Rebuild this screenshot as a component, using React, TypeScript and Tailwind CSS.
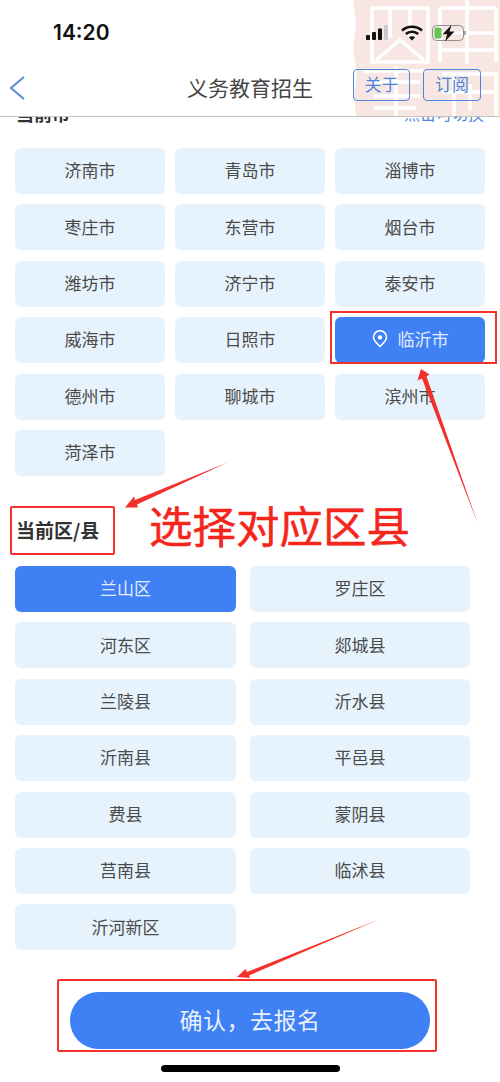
const cities = ['济南市', '青岛市', '淄博市', '枣庄市', '东营市', '烟台市', '潍坊市', '济宁市', '泰安市', '威海市', '日照市', '临沂市', '德州市', '聊城市', '滨州市', '菏泽市'];
const districts = ['兰山区', '罗庄区', '河东区', '郯城县', '兰陵县', '沂水县', '沂南县', '平邑县', '费县', '蒙阴县', '莒南县', '临沭县', '沂河新区'];

const font = { fontFamily: '"Noto Sans CJK SC", "Noto Sans", sans-serif' };

function Chip({ label, active, pin }: { label: string; active?: boolean; pin?: boolean }) {
  return (
    <div className={`h-[46px] rounded-md flex items-center justify-center gap-[10px] pb-[2px] text-[17px] ${active ? 'bg-[#3f80f4] text-[#e4eefd]' : 'bg-[#e6f3fd] text-[#4a4a4a]'}`}>
      {pin && (
        <svg width="16" height="18" viewBox="0 0 16 18" fill="none">
          <path d="M8 16.5C4.5 13 1.5 10.5 1.5 7.2A6.5 6.5 0 0 1 14.5 7.2C14.5 10.5 11.5 13 8 16.5Z" stroke="white" strokeWidth="1.6" />
          <circle cx="8" cy="7.4" r="2.2" fill="white" />
        </svg>
      )}
      {label}
    </div>
  );
}

function Stamp() {
  return (
    <svg className="absolute right-0 top-0" width="150" height="116" viewBox="0 0 150 116" fill="none">
      <path d="M3 0H150V116H6L4 96L7 74L3 50L6 24Z" fill="#f7e6e2" />
      <g stroke="#ffffff" strokeWidth="3.5">
        <path d="M22 8H78V62H22Z" />
        <path d="M40 8V38M60 8V38M26 60L50 40L74 60" />
        <path d="M90 8V62M146 8V62M90 8H146M90 33H146M90 50H146M117 0V64" />
        <path d="M14 71H76M24 82H70M24 96H70M46 66V116M24 108H66" />
        <path d="M92 74H146V116M104 74V116M92 92H146M120 84V110" />
      </g>
    </svg>
  );
}

function StatusBar() {
  return (
    <div className="relative z-10 h-[64px] pt-[18px] pl-[53px] pr-[34px] flex items-start justify-between">
      <span className="text-[21px] leading-[30px] font-semibold text-[#111111]" style={{ fontFamily: '"Inter", sans-serif' }}>14:20</span>
      <div className="flex items-center gap-[9px] h-[30px]">
        <svg width="26" height="16" viewBox="0 0 26 16">
          <rect x="0" y="10" width="4" height="5" rx="1" fill="#111" />
          <rect x="6" y="7" width="4" height="8" rx="1" fill="#111" />
          <rect x="12" y="3.5" width="4" height="11.5" rx="1" fill="#111" />
          <rect x="18" y="0" width="4" height="15" rx="1" fill="#c9c9c9" />
        </svg>
        <svg width="22" height="16" viewBox="0 0 22 16" fill="none" stroke="#111" strokeWidth="2.6">
          <path d="M1 5.5C6.8 0.5 15.2 0.5 21 5.5" />
          <path d="M4.8 9C8.4 6 13.6 6 17.2 9" />
          <path d="M11 15.5L7.8 12.2C9.6 10.8 12.4 10.8 14.2 12.2Z" fill="#111" stroke="none" />
        </svg>
        <svg width="34" height="17" viewBox="0 0 34 17" fill="none">
          <rect x="0.5" y="0.5" width="31" height="15" rx="4" stroke="#8f8f8f" />
          <rect x="2.5" y="2.5" width="7" height="11" rx="2" fill="#62c554" />
          <path d="M33 6V10" stroke="#8f8f8f" strokeWidth="1.5" />
          <path d="M19.5 0L10.5 9.2H15.2L13 16.5L22.5 6.5H17.5Z" fill="#111" />
        </svg>
      </div>
    </div>
  );
}

function NavBar() {
  return (
    <div className="relative z-10 h-[52px] flex items-center justify-center">
      <svg className="absolute left-[9px] top-[11px]" width="16" height="26" viewBox="0 0 16 26" fill="none">
        <path d="M15 2L2 13L15 24" stroke="#5a8ad8" strokeWidth="2" />
      </svg>
      <span className="text-[21px] text-[#444444] -mt-[5px]">义务教育招生</span>
      <div className="absolute right-[19px] top-[5px] flex gap-[13px]">
        <span className="w-[57px] h-[32px] rounded-[4px] border border-[#4d86dc] text-[#4d86dc] text-[17px] flex items-center justify-center pb-[2px]">关于</span>
        <span className="w-[58px] h-[32px] rounded-[4px] border border-[#4d86dc] text-[#4d86dc] text-[17px] flex items-center justify-center pb-[2px]">订阅</span>
      </div>
    </div>
  );
}

function Annotations() {
  return (
    <>
      <div className="absolute left-[330px] top-[311px] w-[167px] h-[53px] border-2 border-[#f4302a]" />
      <div className="absolute left-[10px] top-[506px] w-[105px] h-[49px] border-2 border-[#f4302a] rounded-[2px]" />
      <div className="absolute left-[57px] top-[979px] w-[380px] h-[73px] border-2 border-[#f4302a] rounded-[2px]" />
      <span className="absolute left-[149px] top-[495px] text-[43.5px] leading-[60px] [-webkit-text-stroke:0.5px_#f4261c] text-[#f4261c] whitespace-nowrap">选择对应区县</span>
      <svg className="absolute inset-0 pointer-events-none" width="500" height="1082" viewBox="0 0 500 1082">
        <path d="M421 369L429.5 374.5L426.5 376.5L477.5 523L422 378.5L417.5 380.5Z" fill="#f4302a" />
        <path d="M125 507.5L134 496.5L135 500L227.5 462.5L137 504.5L138 507.5Z" fill="#f4302a" />
        <path d="M237 977L245.5 969L247 972L380 919L249 975.5L250 978Z" fill="#f4302a" />
      </svg>
    </>
  );
}

export default function App() {
  return (
    <div className="relative w-[500px] h-[1082px] overflow-hidden bg-white" style={font}>
      <Stamp />
      <StatusBar />
      <NavBar />
      <div className="relative h-[966px] overflow-hidden border-t border-[#c4c4c4]">
        <div className="flex justify-between px-[16px] -mt-[16px] h-[47px] leading-[24px]">
          <span className="text-[18px] font-bold text-[#333333]">当前市</span>
          <span className="text-[16px] text-[#4d86dc]">点击可切换</span>
        </div>
        <div className="grid grid-cols-[150px_150px_150px] gap-x-[10px] gap-y-[10.4px] pl-[15px]">
          {cities.map((c) => (
            <Chip key={c} label={c} active={c === '临沂市'} pin={c === '临沂市'} />
          ))}
        </div>
        <div className="pl-[16px] mt-[42px] h-[48px] text-[19px] font-bold text-[#333333] leading-[24px]">当前区/县</div>
        <div className="grid grid-cols-[221px_220px] gap-x-[14px] gap-y-[10.4px] pl-[15px]">
          {districts.map((d) => (
            <Chip key={d} label={d} active={d === '兰山区'} />
          ))}
        </div>
        <div className="mx-[70px] mt-[42px] h-[57px] rounded-full bg-[#3f80f4] text-[#e8f0fd] text-[23px] tracking-[0.5px] flex items-center justify-center pb-[4px]">确认，去报名</div>
      </div>
      <div className="absolute left-[161px] top-[1065px] w-[179px] h-[7px] rounded-full bg-black" />
      <Annotations />
    </div>
  );
}
